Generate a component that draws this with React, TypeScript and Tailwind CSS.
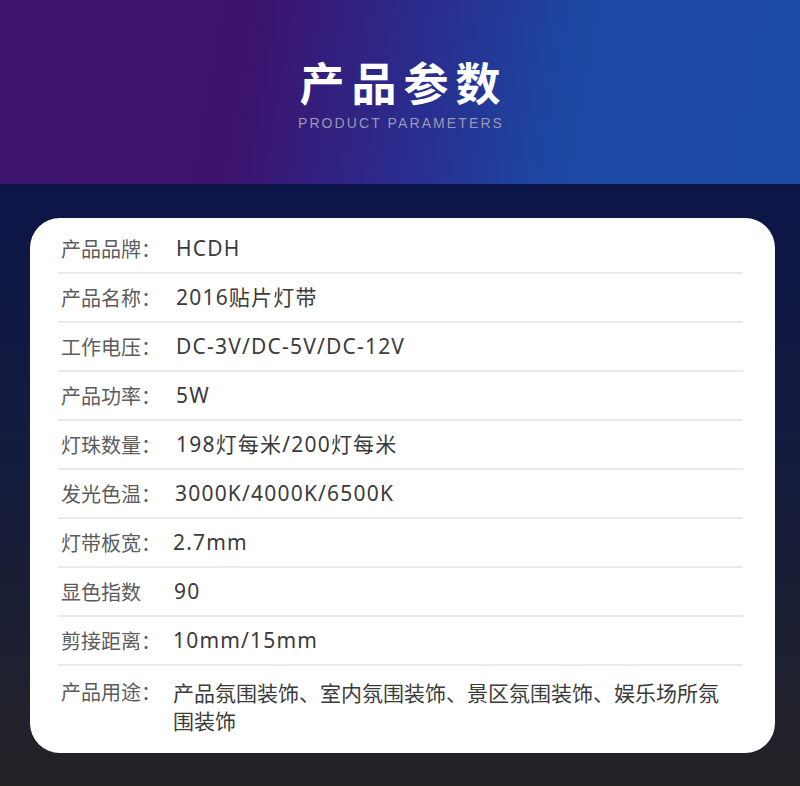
const rows: { label: string; value: string; shift: string }[] = [
  { label: "产品品牌：", value: "HCDH", shift: "pl-[3px]" },
  { label: "产品名称：", value: "2016贴片灯带", shift: "pl-[3px]" },
  { label: "工作电压：", value: "DC-3V/DC-5V/DC-12V", shift: "pl-[3px]" },
  { label: "产品功率：", value: "5W", shift: "pl-[3px]" },
  { label: "灯珠数量：", value: "198灯每米/200灯每米", shift: "pl-[3px]" },
  { label: "发光色温：", value: "3000K/4000K/6500K", shift: "pl-[2px]" },
  { label: "灯带板宽：", value: "2.7mm", shift: "pl-[0px]" },
  { label: "显色指数", value: "90", shift: "pl-[1px]" },
  { label: "剪接距离：", value: "10mm/15mm", shift: "pl-[0px]" },
];

export default function App() {
  return (
    <div
      className="w-[800px] h-[786px] overflow-hidden"
      style={{ fontFamily: '"Noto Sans", "Noto Sans CJK SC", sans-serif' }}
    >
      <header className="h-[184px] flex flex-col items-center bg-[linear-gradient(100deg,#3e1670_0%,#3d126c_30%,#2a2c8e_52%,#1c48a2_70%,#1b4aa4_100%)]">
        <h1
          className="mt-[52px] text-white text-[45px] leading-[60px] font-bold tracking-[7px] pl-[7px]"
          style={{ fontFamily: '"Noto Sans CJK SC", sans-serif' }}
        >
          产品参数
        </h1>
        <p
          className="mt-[2px] text-[#9a98b4] text-[14px] leading-[18px] tracking-[2.1px] pl-[2px]"
          style={{ fontFamily: '"Liberation Sans", Arial, sans-serif' }}
        >
          PRODUCT PARAMETERS
        </p>
      </header>

      <section className="h-[602px] pt-[34px] bg-[linear-gradient(180deg,#0c1547_0%,#141c3e_45%,#232326_100%)]">
        <div className="ml-[30px] w-[745px] rounded-[30px] bg-white pt-[7px] pb-[19px]">
          {rows.map((r) => (
            <div
              key={r.label}
              className="ml-[28px] mr-[32px] h-[49px] flex items-center border-b-2 border-[#e9e9e9] text-[20px]"
            >
              <span
                className="w-[115px] pl-[3px] text-[#5c5c5c]"
                style={{ fontFamily: '"Noto Sans CJK SC", sans-serif' }}
              >
                {r.label}
              </span>
              <span className={`${r.shift} text-[21px] text-[#3b3b3b] tracking-[1.2px]`}>
                {r.value}
              </span>
            </div>
          ))}
          <div className="ml-[28px] mr-[32px] pt-[12px] flex items-start text-[20px] leading-[28px]">
            <span
              className="w-[115px] pl-[3px] text-[#5c5c5c] shrink-0"
              style={{ fontFamily: '"Noto Sans CJK SC", sans-serif' }}
            >
              产品用途：
            </span>
            <span
              className="w-[556px] text-[21px] text-[#3b3b3b]"
              style={{ fontFamily: '"Noto Sans CJK SC", sans-serif' }}
            >
              产品氛围装饰、室内氛围装饰、景区氛围装饰、娱乐场所氛围装饰
            </span>
          </div>
        </div>
      </section>
    </div>
  );
}
